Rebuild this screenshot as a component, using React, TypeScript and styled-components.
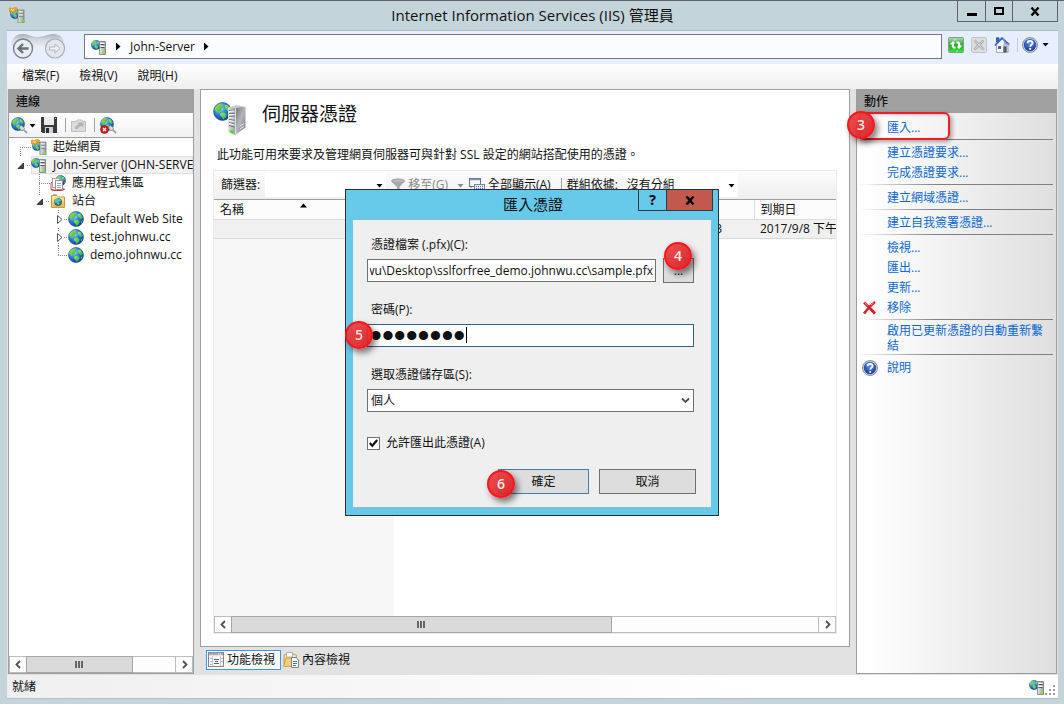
import React, { useLayoutEffect, useRef, useState } from "react";
import styled, { createGlobalStyle, css } from "styled-components";

const FONT = '"Open Sans", "Noto Sans CJK TC", sans-serif';

const GlobalStyle = createGlobalStyle`
  * { box-sizing: border-box; }
  body { margin: 0; font: 12px/18px ${FONT}; color: #111; }
  button, input, select { font: inherit; color: inherit; margin: 0; border-radius: 0; outline: none; }
  button { padding: 0; border: 0; background: none; }
  svg { display: block; flex: none; }
`;

/* ---------- icons ---------- */

const HiddenSvg = styled.svg`
  position: absolute;
`;

const IconDefs = () => (
  <HiddenSvg width="0" height="0" aria-hidden="true">
    <defs>
      <radialGradient id="sea" cx="0.35" cy="0.3" r="0.8">
        <stop offset="0" stopColor="#b4eaff" />
        <stop offset="0.45" stopColor="#2f7fe0" />
        <stop offset="1" stopColor="#0b2f8f" />
      </radialGradient>
      <linearGradient id="land" x1="0" y1="0" x2="1" y2="1">
        <stop offset="0" stopColor="#a4ec6a" />
        <stop offset="1" stopColor="#1fae22" />
      </linearGradient>
      <linearGradient id="steel" x1="0" y1="0" x2="1" y2="0">
        <stop offset="0" stopColor="#e6e8ea" />
        <stop offset="1" stopColor="#9a9ea3" />
      </linearGradient>
      <linearGradient id="steelDark" x1="0" y1="0" x2="1" y2="1">
        <stop offset="0" stopColor="#6c6f73" />
        <stop offset="0.5" stopColor="#b4b6b9" />
        <stop offset="1" stopColor="#75787c" />
      </linearGradient>
      <linearGradient id="leaf" x1="0" y1="0" x2="0" y2="1">
        <stop offset="0" stopColor="#b4dcb0" />
        <stop offset="0.5" stopColor="#27a32b" />
        <stop offset="1" stopColor="#35ea35" />
      </linearGradient>
      <linearGradient id="gold" x1="0" y1="0" x2="0" y2="1">
        <stop offset="0" stopColor="#fff0b8" />
        <stop offset="1" stopColor="#e8b64a" />
      </linearGradient>
      <radialGradient id="ink" cx="0.5" cy="0.3" r="0.8">
        <stop offset="0" stopColor="#5f8fe8" />
        <stop offset="1" stopColor="#0d2d8c" />
      </radialGradient>
      <linearGradient id="pill" x1="0" y1="0" x2="0" y2="1">
        <stop offset="0" stopColor="#a9adb5" />
        <stop offset="0.4" stopColor="#d4d8e2" />
        <stop offset="1" stopColor="#eaf0fd" />
      </linearGradient>
    </defs>
  </HiddenSvg>
);

const GlobeShape = ({ x = 0, y = 0, s = 16 }: { x?: number; y?: number; s?: number }) => (
  <g transform={`translate(${x} ${y}) scale(${s / 16})`}>
    <circle cx="8" cy="8" r="7.5" fill="url(#sea)" stroke="#1d4a94" strokeWidth="0.6" />
    <path d="M2 4.4C3.4 2 6 1 8.4 1.2L7.6 3 8.8 4.2 6.8 5.6 6.6 7.2 4.6 8 5.2 9.6 3.2 9 1.4 6.6Z" fill="url(#land)" />
    <path d="M10 2.4 12.6 3 14.6 6.2 13.8 8.4 12 7.6 10.4 5.4Z" fill="url(#land)" />
    <path d="M6.6 9.2 9.4 8.8 11.6 10.6 11 13 8.6 14.8 7.4 12.6 5.8 11Z" fill="url(#land)" />
    <path d="M13 10.4 14.6 9.4 13.4 12.4Z" fill="url(#land)" />
  </g>
);

const ServerShape = () => (
  <g>
    <path d="M8.500 2.500h6v13h-6z" fill="url(#steel)" stroke="#74787d" strokeWidth="0.8" />
    <path d="M9.500 5.500h4M9.500 8.500h4" stroke="#50545a" />
    <path d="M9.500 4.500h4M9.500 7.500h4" stroke="#fff" />
    <rect x="11.5" y="12.5" width="2.5" height="2" fill="#8ee01c" />
  </g>
);

const Globe = () => (
  <svg width="16" height="16" viewBox="0 0 16 16"><GlobeShape /></svg>
);

const ServerIcon = () => (
  <svg width="16" height="16" viewBox="0 0 16 16">
    <GlobeShape x={0} y={1} s={10} />
    <ServerShape />
  </svg>
);

const IisIcon = () => (
  <svg width="16" height="16" viewBox="0 0 16 16">
    <GlobeShape x={1} y={2} s={10} />
    <path d="M0.5 1 3.5 1.500 5.500 0.5 8.500 1 8 4 6 3.5 5 5.500 2.5 4.5 0.5 5Z" fill="#f6a91c" stroke="#c9770a" strokeWidth="0.5" />
    <path d="M2 2.2 3.6 3.4 5 2.6" stroke="#fff2b0" fill="none" />
    <g transform="translate(0.5 0.5)"><ServerShape /></g>
  </svg>
);

const BigServerIcon = () => (
  <svg width="34" height="34" viewBox="0 0 34 34">
    <GlobeShape x={0} y={0} s={19} />
    <path d="M15 5.500 22 4.500V33L15 30Z" fill="url(#steel)" />
    <path d="M22 4.500 32.500 5V25.500L22 33Z" fill="url(#steelDark)" />
    <path d="M16 8.500 21.500 8M16 11.500 21.500 11.500M16 14.500 21.500 15M16 17.500 21.500 18.500M16 20.500 21.500 22M16 23.500 21.500 25" stroke="#6f7277" />
    <path d="M16 9.500 21.500 9M16 12.500 21.500 12.500M16 15.500 21.500 16M16 18.500 21.500 19.500M16 21.500 21.500 23" stroke="#fff" />
    <path d="M17 29 20.500 30.500" stroke="#4be01c" strokeWidth="2.500" />
    <path d="M27 24 31 21.500M27 27 31 24.500" stroke="#e9eaec" />
    <path d="M15 5.500 24 3 32.500 5 22 6Z" fill="#c9cbce" />
    <path d="M22.500 6V32" stroke="#f1f2f3" strokeWidth="0.800" />
  </svg>
);

const ConnectIcon = ({ denied }: { denied?: boolean }) => (
  <svg width="17" height="17" viewBox="0 0 17 17">
    <GlobeShape x={0} y={0} s={14} />
    <path d="M8 10 10.500 8.500 13.500 11 12.500 13.500 10 13.500Z" fill="#d3d8dd" stroke="#7d8690" strokeWidth="0.8" />
    <path d="M13 13 16 16" stroke="#9aa2aa" strokeWidth="1.800" />
    {denied && (
      <g>
        <circle cx="4.500" cy="12.500" r="4" fill="#d2191f" stroke="#8d0f12" strokeWidth="0.600" />
        <path d="M3 11 6 14M6 11 3 14" stroke="#fff" strokeWidth="1.400" />
      </g>
    )}
  </svg>
);

const SaveIcon = () => (
  <svg width="16" height="16" viewBox="0 0 16 16">
    <path d="M0 0H16V16H1.500L0 14.500Z" fill="#3a3a3c" />
    <rect x="3" y="0" width="10" height="8" fill="#e9ebed" />
    <rect x="4" y="10" width="8" height="6" fill="#cfd1d4" />
    <rect x="5" y="11" width="3" height="5" fill="#2b2b2d" />
    <rect x="14" y="1" width="1" height="1" fill="#bbb" />
  </svg>
);

const UpIcon = () => (
  <svg width="15" height="16" viewBox="0 0 15 16">
    <path d="M0.500 4.500H5L6 3H11L12 4.500H14.500V14.500H0.500Z" fill="#dcdcdc" stroke="#bfbfbf" />
    <path d="M4 12C4 9 6 7.500 8 7.500L6.500 5.500H12.500V10.500L10.500 9C8 9.500 7 10.500 6.500 12Z" fill="#b3b3b3" />
  </svg>
);

const PoolIcon = () => (
  <svg width="16" height="16" viewBox="0 0 16 16">
    <GlobeShape x={5} y={0} s={11} />
    <path d="M1 14C3 16 11 16 14.500 14" stroke="#c4373a" strokeWidth="1.500" fill="none" />
    <path d="M1 14V8L3 6.500" stroke="#cf4a4c" fill="none" />
    <rect x="2.500" y="3.500" width="7" height="9" fill="#fff" stroke="#b09a9c" />
    <rect x="5.500" y="5.500" width="7" height="9" fill="#fdfdfd" stroke="#a08a8d" />
    <path d="M7 8.500h4M7 10.500h4M7 12.500h4" stroke="#9aa6b4" />
  </svg>
);

const SitesIcon = () => (
  <svg width="16" height="16" viewBox="0 0 16 16">
    <path d="M1.500 2.500H7L8.500 4H14.500V14.500H1.500Z" fill="url(#gold)" stroke="#c69a3a" />
    <path d="M3 1.500H6.500" stroke="#8ec4e8" />
    <GlobeShape x={4} y={5} s={8} />
  </svg>
);

const RefreshIcon = () => (
  <svg width="16" height="16" viewBox="0 0 16 16">
    <rect x="0.500" y="0.500" width="15" height="15" rx="1" fill="url(#leaf)" stroke="#7fa382" />
    <path d="M1.500 7.500 5 4 7.500 6.500H6V9.500H7.500V11.500H5.500L3.800 10V7.500Z" fill="#fff" />
    <path d="M14.500 8.500 11 12 8.500 9.500H10V6.500H8.500V4.500H10.500L12.200 6V8.500Z" fill="#fff" />
    <path d="M6 3.500 8 2M10 13.500 8 14.500" stroke="#dff5df" strokeWidth="0.800" />
  </svg>
);

const StopIcon = () => (
  <svg width="16" height="16" viewBox="0 0 16 16">
    <rect x="0.500" y="0.500" width="15" height="15" rx="1" fill="#dcdee2" stroke="#c0c2c6" />
    <path d="M3.500 3.500 12.500 12.500M12.500 3.500 3.500 12.500" stroke="#b0b2b6" strokeWidth="2.800" />
    <path d="M4 4 12 12M12 4 4 12" stroke="#d4d6da" strokeWidth="1" />
  </svg>
);

const HomeIcon = () => (
  <svg width="16" height="16" viewBox="0 0 16 16">
    <path d="M2.500 0.800H5V5H2.500Z" fill="#3c6fd8" stroke="#28418c" strokeWidth="0.800" />
    <path d="M2.500 8 8 2 14 7.500V15.500H2.500Z" fill="#f1f4f8" stroke="#8e97a5" strokeWidth="0.800" />
    <path d="M9 8 11 3.500 14.500 7V15.500H9Z" fill="#b9c0cb" />
    <path d="M0.800 8.500 8 1 15.200 7.500" stroke="#2f5fc6" strokeWidth="1.600" fill="none" />
    <path d="M9.500 2 11 6 15.500 8" stroke="#7f9bd6" strokeWidth="1.200" fill="none" />
    <rect x="4" y="9" width="3" height="3" fill="#53617a" />
    <rect x="9.500" y="9.500" width="3" height="6" fill="#4e5a70" />
  </svg>
);

const HelpIcon = () => (
  <svg width="16" height="16" viewBox="0 0 16 16">
    <circle cx="8" cy="8" r="7.500" fill="#cfd6e4" stroke="#6e7891" strokeWidth="0.800" />
    <circle cx="8" cy="8" r="6.200" fill="url(#ink)" />
    <path d="M5.600 6.200C5.600 3.200 10.600 3.200 10.600 6 10.600 7.800 8.200 7.800 8.200 9.800" stroke="#fff" strokeWidth="1.800" fill="none" />
    <rect x="7.300" y="11" width="1.800" height="1.800" fill="#fff" />
  </svg>
);

const RemoveIcon = () => (
  <svg width="15" height="14" viewBox="0 0 15 14">
    <path d="M2 1.500C5 4 9 8.500 13 12.500" stroke="#e0181e" strokeWidth="2.800" fill="none" />
    <path d="M13 1C9 4 5 8.500 2 12.500" stroke="#d2282c" strokeWidth="2.600" fill="none" />
    <path d="M2.500 1.500 6 4.500M11.500 1.800 9 4" stroke="#f59a9c" />
  </svg>
);

const FunnelIcon = () => (
  <svg width="14" height="14" viewBox="0 0 14 14">
    <ellipse cx="7" cy="3" rx="6.500" ry="2" fill="#b9b9b9" stroke="#9a9a9a" />
    <path d="M0.500 3.500C3 5.500 11 5.500 13.500 3.500L8.500 9V12L6 13.500V9Z" fill="#a8a8a8" />
  </svg>
);

const ShowAllIcon = () => (
  <svg width="16" height="16" viewBox="0 0 16 16">
    <rect x="0.500" y="1.500" width="11" height="8" fill="#f4f6f9" stroke="#6d7683" />
    <path d="M1 2.500H11" stroke="#8794a6" strokeWidth="1.500" />
    <path d="M2 9 2 11" stroke="#6d7683" />
    <rect x="5.500" y="7.500" width="10" height="5" fill="#dfe9f6" stroke="#7887a0" />
    <path d="M7 9.500h7M7 11.500h7" stroke="#4a76bb" strokeDasharray="1 1" />
  </svg>
);

const FeaturesIcon = () => (
  <svg width="16" height="16" viewBox="0 0 16 16">
    <rect x="0.500" y="0.500" width="15" height="14" fill="#fafafa" stroke="#8b8289" />
    <path d="M1 2H15" stroke="#a9abb4" strokeWidth="2.500" />
    <path d="M10 2h4" stroke="#fff" strokeDasharray="1 1" />
    <path d="M4.500 4V14M12.500 4V14" stroke="#c3c5cb" />
    <path d="M2 6.500h2M2 9.500h2M2 12.500h2M13 6.500h2M13 9.500h2" stroke="#b9bbc2" />
    <path d="M6 7.500h5M7 9.500h3M6 11.500h5" stroke="#5c5e66" />
  </svg>
);

const ContentIcon = () => (
  <svg width="16" height="16" viewBox="0 0 16 16">
    <path d="M1 3 5 1.500 9 2 13.500 3V14H1Z" fill="url(#gold)" stroke="#b98f38" strokeWidth="0.800" />
    <path d="M3.500 0.500H9.500V5H3.500Z" fill="#fff" stroke="#a5a5a5" strokeWidth="0.800" />
    <path d="M0.500 14.500 3 6H9V14.500Z" fill="#f3cf76" stroke="#c79b3f" strokeWidth="0.800" />
    <path d="M8.500 5.500H13L15.500 8V15.500H8.500Z" fill="#fff" stroke="#5d6f8d" strokeWidth="0.800" />
    <path d="M10 9.500h4M10 11.500h4M10 13.500h3" stroke="#3b74c9" />
  </svg>
);

const NavArrows = () => (
  <svg width="56" height="30" viewBox="0 0 56 30">
    <path d="M1 15C1 5 6 1 13 1 19 1 21 4 27 4 34 4 38 1 43 1 51 1 55 6 55 15Z" fill="url(#pill)" />
    <circle cx="13" cy="15.500" r="9.500" fill="#e9edf6" stroke="#7d8087" strokeWidth="1.400" />
    <path d="M18.500 15.500H9M13 11 8.500 15.500 13 20" stroke="#6b6e74" strokeWidth="2.400" fill="none" />
    <circle cx="45" cy="15.500" r="9.500" fill="#e2e6ef" stroke="#a9adb6" strokeWidth="1.200" />
    <path d="M39.500 14H45V11L50 15.500 45 20V17H39.500Z" fill="#eef1f8" stroke="#b2b6bf" />
  </svg>
);

const Triangle = ({ dir, color = "#000" }: { dir: "down" | "up" | "right"; color?: string }) => (
  <svg width="7" height="9" viewBox="0 0 7 9">
    <path
      d={dir === "down" ? "M0.500 3H6.500L3.500 6.500Z" : dir === "up" ? "M0 6.500H7L3.500 2.500Z" : "M1 0.500V8.500L5.500 4.500Z"}
      fill={color}
    />
  </svg>
);

const Chevron = ({ dir }: { dir: "left" | "right" | "down" }) => (
  <svg width="9" height="9" viewBox="0 0 9 9">
    <path
      d={dir === "left" ? "M6 1 2.500 4.500 6 8" : dir === "right" ? "M3 1 6.500 4.500 3 8" : "M1 2.500 4.500 6 8 2.500"}
      fill="none"
      stroke="#505050"
      strokeWidth="1.800"
    />
  </svg>
);

/* ---------- window frame ---------- */

const Window = styled.div`
  position: relative;
  display: flex;
  flex-direction: column;
  height: 100vh;
  padding: 0 6px 5px 7px;
  border-top: 1px solid #5f626b;
  background: #c3d5da;
`;

const TitleBar = styled.header`
  position: relative;
  display: flex;
  align-items: flex-start;
  justify-content: space-between;
  flex: none;
  height: 29px;
  padding-left: 2px;
`;

const TitleIcon = styled.span`
  padding-top: 6px;
`;

const Title = styled.h1`
  position: absolute;
  inset: 0;
  margin: 0;
  font-size: 15px;
  line-height: 29px;
  font-weight: 400;
  text-align: center;
  pointer-events: none;
`;

const WindowButtons = styled.div`
  display: flex;
  border: 1px solid #5f626b;
  border-top: 0;
`;

const WindowButton = styled.button<{ $wide?: boolean }>`
  display: grid;
  place-items: center;
  width: ${(p) => (p.$wide ? 45 : 27)}px;
  height: 20px;
  & + & { border-left: 1px solid #5f626b; }
`;

const Client = styled.div`
  display: flex;
  flex-direction: column;
  flex: 1;
  min-height: 0;
  border-top: 1px solid #adbcc2;
  border-bottom: 1px solid #b3bfc4;
  background: #e2e2e2;
`;

const NavBar = styled.div`
  display: flex;
  align-items: center;
  flex: none;
  height: 33px;
  padding: 0 9px 0 3px;
  background: #e7eefe;
`;

const Address = styled.div`
  display: flex;
  align-items: center;
  gap: 8px;
  flex: 1;
  height: 25px;
  margin: 0 6px 2px 18px;
  padding-left: 6px;
  border: 1px solid #777;
  background: #fbfcff;
`;

const NavTools = styled.div`
  display: flex;
  align-items: center;
  gap: 7px;
  margin-bottom: 6px;
`;

const IconButton = styled.button`
  display: flex;
  align-items: center;
  gap: 4px;
`;

const MenuDropButton = styled(IconButton)`
  gap: 1px;
`;

const Divider = styled.span`
  width: 1px;
  height: 14px;
  background: #a0a0a0;
`;

const NavDivider = styled(Divider)`
  margin-right: -3px;
  background: #c4c8d2;
`;

const MenuBar = styled.nav`
  display: flex;
  gap: 20px;
  flex: none;
  height: 25px;
  padding-left: 15px;
  background: linear-gradient(#fefefe, #efefef);
`;

const MenuItem = styled.button`
  height: 23px;
  line-height: 23px;
`;

const Main = styled.main`
  display: flex;
  gap: 6px;
  flex: 1;
  min-height: 0;
  padding: 0 1px 1px;
`;

/* ---------- panes ---------- */

const Pane = styled.section<{ $width: number; $shaded?: boolean }>`
  display: flex;
  flex-direction: column;
  flex: none;
  width: ${(p) => p.$width}px;
  border: 1px solid #9e9e9e;
  background: ${(p) => (p.$shaded ? "linear-gradient(90deg, #fff 5%, #dfdfdf)" : "#fff")};
`;

const PaneHeader = styled.h2`
  flex: none;
  height: 23px;
  margin: 0;
  padding-left: 7px;
  font-size: 12px;
  line-height: 23px;
  font-weight: 500;
  background: #a0a0a0;
`;

const ConnectionTools = styled.div`
  display: flex;
  align-items: center;
  gap: 5px;
  flex: none;
  height: 25px;
  padding-left: 2px;
  border-bottom: 1px solid #a0a0a0;
  background: linear-gradient(#fff, #f2f2f2);
  ${Divider} { margin-left: 3px; }
`;

const Tree = styled.ul`
  flex: 1;
  min-height: 0;
  margin: 0;
  padding: 0;
  overflow: hidden;
  list-style: none;
`;

const TreeRow = styled.li`
  display: flex;
  align-items: center;
  height: 18px;
  white-space: nowrap;
`;

const TreeNode = styled.span<{ $selected?: boolean }>`
  display: flex;
  align-items: center;
  gap: 6px;
  flex: 1;
  min-width: 0;
  height: 18px;
  overflow: hidden;
  ${(p) =>
    p.$selected &&
    css`
      background: #f1f1f1;
      box-shadow: inset 0 0 0 1px #e0e0e0;
    `}
`;

type Expander = "open" | "closed" | "none";

interface NodeData {
  label: string;
  indent: number;
  expander: Expander;
  icon: React.ReactNode;
  selected?: boolean;
  lines: string;
}

const nodes: NodeData[] = [
  { label: "起始網頁", indent: 22, expander: "none", icon: <IisIcon />, lines: "M11.5 9V18M11 9.5H22" },
  { label: "John-Server (JOHN-SERVER)", indent: 22, expander: "open", icon: <ServerIcon />, selected: true, lines: "M18 9.5H22" },
  { label: "應用程式集區", indent: 41, expander: "none", icon: <PoolIcon />, lines: "M30.5 0V18M30 9.5H41" },
  { label: "站台", indent: 41, expander: "open", icon: <SitesIcon />, lines: "M30.5 0V4M37 9.5H41" },
  { label: "Default Web Site", indent: 59, expander: "closed", icon: <Globe />, lines: "M49.5 0V3M55 9.5H59" },
  { label: "test.johnwu.cc", indent: 59, expander: "closed", icon: <Globe />, lines: "M49.5 0V3M49.5 15V18M55 9.5H59" },
  { label: "demo.johnwu.cc", indent: 59, expander: "none", icon: <Globe />, lines: "M49.5 0V9M49 9.5H59" },
];

const Guide = ({ indent, expander, lines }: Pick<NodeData, "indent" | "expander" | "lines">) => (
  <svg width={indent} height="18" viewBox={`0 0 ${indent} 18`}>
    <path d={lines} stroke="#8c8c8c" strokeDasharray="1 1" fill="none" />
    {expander === "open" && <path d={`M${indent - 13} 12.500H${indent - 7.5}V7Z`} fill="#404040" stroke="#222" strokeWidth="0.800" />}
    {expander === "closed" && <path d={`M${indent - 10.5} 5.500V13.500L${indent - 6} 9.500Z`} fill="#fff" stroke="#555" />}
  </svg>
);

const ScrollTrack = styled.div`
  display: flex;
  flex: none;
  height: 17px;
  border: 1px solid #bdbdbd;
  background: #fdfdfd;
`;

const ScrollButton = styled.button`
  display: grid;
  place-items: center;
  flex: none;
  width: 16px;
`;

const ScrollLane = styled.div`
  display: flex;
  flex: 1;
  border: solid #bdbdbd;
  border-width: 0 1px;
`;

const ScrollThumb = styled.div<{ $share: number }>`
  display: flex;
  align-items: center;
  justify-content: center;
  gap: 1px;
  width: ${(p) => p.$share}%;
  margin: -1px 0 -1px -1px;
  border: 1px solid #a6a6a6;
  background: #dadada;
`;

const Grip = styled.i`
  width: 2px;
  height: 7px;
  background: #666;
`;

const ScrollBar = ({ share }: { share: number }) => (
  <ScrollTrack>
    <ScrollButton aria-label="向左捲動"><Chevron dir="left" /></ScrollButton>
    <ScrollLane>
      <ScrollThumb $share={share}><Grip /><Grip /><Grip /></ScrollThumb>
    </ScrollLane>
    <ScrollButton aria-label="向右捲動"><Chevron dir="right" /></ScrollButton>
  </ScrollTrack>
);

/* ---------- centre ---------- */

const Centre = styled.div`
  display: flex;
  flex-direction: column;
  flex: 1;
  min-width: 0;
`;

const Feature = styled.section`
  display: flex;
  flex-direction: column;
  flex: 1;
  min-height: 0;
  padding: 12px;
  border: 1px solid #9e9e9e;
  background: #fff;
`;

const FeatureHead = styled.div`
  display: flex;
  gap: 15px;
  height: 44px;
`;

const FeatureTitle = styled.h2`
  margin: 0;
  font-size: 19px;
  line-height: 24px;
  font-weight: 400;
`;

const Description = styled.p`
  margin: 0;
  padding: 0 4px 6px;
  line-height: 18px;
`;

const Grid = styled.div`
  display: flex;
  flex-direction: column;
  flex: 1;
  min-height: 0;
  border: 1px solid #ececec;
`;

const FilterBar = styled.div`
  display: flex;
  align-items: center;
  flex: none;
  height: 29px;
  padding-left: 7px;
  border-bottom: 1px solid #a0a0a0;
  background: linear-gradient(#fcfcfc, #efefef);
  white-space: nowrap;
`;

const Combo = styled.span<{ $width: number }>`
  position: relative;
  width: ${(p) => p.$width}px;
  height: 24px;
  margin: 0 4px 0 5px;
  background: #fff;
  & > svg { position: absolute; top: 8px; right: 3px; pointer-events: none; }
`;

const comboField = css`
  width: 100%;
  height: 100%;
  padding: 0 4px;
  border: 0;
  background: none;
  appearance: none;
`;

const ComboInput = styled.input`${comboField}`;
const ComboSelect = styled.select`${comboField}`;

const ToolButton = styled.button<{ $muted?: boolean }>`
  display: flex;
  align-items: center;
  gap: 3px;
  margin-left: 1px;
  color: ${(p) => (p.$muted ? "#8a8a8a" : "#111")};
  & > svg:last-child:not(:first-child) { margin: 0 4px 0 6px; }
`;

const FilterDivider = styled(Divider)`
  margin: 0 5px 0 10px;
`;

const ListArea = styled.div`
  flex: 1;
  min-height: 0;
  overflow: hidden;
  background: linear-gradient(90deg, #f7f7f7 180px, #fff 180px);
`;

const List = styled.table`
  width: 100%;
  table-layout: fixed;
  border-collapse: collapse;
  white-space: nowrap;
`;

const HeadCell = styled.th<{ $width?: number }>`
  position: relative;
  width: ${(p) => (p.$width ? `${p.$width}px` : "auto")};
  height: 19px;
  padding: 0 6px;
  border-right: 1px solid #dcdcdc;
  border-bottom: 1px solid #dcdcdc;
  line-height: 17px;
  font-weight: 400;
  text-align: left;
  background: #fcfcfc;
  &:last-child { border-right: 0; }
  & > svg { position: absolute; top: 1px; left: 86px; }
`;

const Cell = styled.td<{ $end?: boolean }>`
  height: 19px;
  padding: 0 ${(p) => (p.$end ? 32 : 0)}px 0 6px;
  border-bottom: 1px solid #d9d9d9;
  line-height: 17px;
  overflow: hidden;
  text-align: ${(p) => (p.$end ? "right" : "left")};
  background: #f0f0f0;
`;

const ViewTabs = styled.div`
  display: flex;
  gap: 2px;
  flex: none;
  height: 27px;
  padding: 3px 6px;
`;

const ViewTab = styled.button<{ $active?: boolean }>`
  display: flex;
  align-items: center;
  gap: 3px;
  height: 20px;
  ${(p) => p.$active && css`
    padding: 0 5px 0 1px;
    border: 1px solid #3399ff;
    background: #fff;
  `}
`;

/* ---------- actions ---------- */

const ActionList = styled.div`
  padding: 5px 3px 0 2px;
`;

const ActionGroup = styled.div`
  & + & {
    padding-top: 5px;
    background: linear-gradient(90deg, transparent, #808080 40%) 0 1px / 100% 1px no-repeat;
  }
`;

const ActionRow = styled.div<{ $tall?: boolean }>`
  position: relative;
  display: grid;
  grid-template-columns: 28px 1fr;
  align-items: center;
  line-height: ${(p) => (p.$tall ? 15 : 20)}px;
  padding-right: 8px;
  & > svg { margin-left: 3px; }
`;

const ActionLink = styled.a`
  grid-column: 2;
  color: #0a68d0;
  text-decoration: none;
`;

const Highlight = styled.span`
  position: absolute;
  top: -6px;
  left: -1px;
  width: 92px;
  height: 28px;
  border: 2px solid #ee1c25;
  border-radius: 6px;
  box-shadow: 2px 2px 4px rgba(0, 0, 0, 0.35), inset 1px 1px 3px rgba(0, 0, 0, 0.2);
  pointer-events: none;
`;

const Badge = styled.span<{ $top: number; $left: number }>`
  position: absolute;
  top: ${(p) => p.$top}px;
  left: ${(p) => p.$left}px;
  z-index: 2;
  width: 28px;
  height: 28px;
  border: 2px solid #f8151b;
  border-radius: 50%;
  background: linear-gradient(135deg, rgba(238, 70, 72, 0.95), rgba(214, 30, 34, 0.95));
  box-shadow: 3px 4px 6px rgba(0, 0, 0, 0.5);
  color: #ffe9e9;
  font: 600 14px/24px "Open Sans", sans-serif;
  text-align: center;
  pointer-events: none;
`;

const StatusBar = styled.footer`
  display: flex;
  align-items: center;
  justify-content: space-between;
  flex: none;
  height: 23px;
  padding: 0 3px 0 5px;
  background: linear-gradient(90deg, #efefef, #fff 70%);
`;

const StatusIcons = styled.span`
  display: flex;
  align-items: flex-end;
`;

/* ---------- dialog ---------- */

const Overlay = styled.div`
  position: fixed;
  inset: 0;
  display: grid;
  place-items: center;
  padding-top: 1px;
`;

const DialogBox = styled.section`
  width: 374px;
  padding: 0 7px 7px;
  border: 1px solid #26343a;
  background: #66c9ea;
`;

const DialogTitleBar = styled.div`
  position: relative;
  display: flex;
  justify-content: flex-end;
  height: 29px;
  margin-right: -2px;
`;

const DialogTitle = styled.h2`
  position: absolute;
  inset: 0;
  margin: 0;
  font-size: 15px;
  line-height: 29px;
  font-weight: 400;
  text-align: center;
  pointer-events: none;
`;

const DialogButton = styled.button<{ $close?: boolean }>`
  display: grid;
  place-items: center;
  width: ${(p) => (p.$close ? 47 : 28)}px;
  height: 21px;
  border: 1px solid #2b3c44;
  border-top: 0;
  border-right-width: ${(p) => (p.$close ? 1 : 0)}px;
  font: 700 14px/18px "Noto Sans", sans-serif;
  color: #000;
  background: ${(p) => (p.$close ? "#c1594f" : "transparent")};
`;

const DialogBody = styled.form`
  display: flex;
  flex-direction: column;
  height: 289px;
  padding: 16px 15px 13px 14px;
  border: solid #8fbccb;
  border-width: 1px 0;
  background: #efefef;
`;

const Field = styled.div`
  display: flex;
  flex-direction: column;
  gap: 6px;
  margin-bottom: 19px;
  padding-right: 2px;
  & > label { padding-left: 4px; line-height: 17px; }
`;

const FieldRow = styled.div`
  position: relative;
  display: flex;
  align-items: center;
  gap: 7px;
  height: 23px;
`;

const TextBox = styled.input<{ $focused?: boolean }>`
  flex: 1;
  min-width: 0;
  height: 23px;
  padding: 0 2px;
  border: 1px solid ${(p) => (p.$focused ? "#2c628b" : "#707070")};
  background: #fff;
`;

const PasswordBox = styled(TextBox)`
  font: 34px/21px "Liberation Sans", sans-serif;
`;

const Caret = styled.i`
  position: absolute;
  top: 3px;
  left: 99px;
  width: 1px;
  height: 16px;
  background: #000;
`;

const StoreSelect = styled.select`
  flex: 1;
  height: 23px;
  padding: 0 3px;
  border: 1px solid #707070;
  background: #fff;
  appearance: none;
`;

const SelectArrow = styled.span`
  position: absolute;
  top: 7px;
  right: 4px;
  pointer-events: none;
`;

const PushButton = styled.button<{ $width: number; $primary?: boolean }>`
  flex: none;
  width: ${(p) => p.$width}px;
  height: 25px;
  border: 1px solid ${(p) => (p.$primary ? "#3c7fb1" : "#707070")};
  background: #dddddd;
`;

const CheckLabel = styled.label`
  position: relative;
  display: flex;
  align-items: center;
  gap: 6px;
  margin-top: 3px;
  line-height: 18px;
  & > svg { position: absolute; left: 2px; top: 5px; }
`;

const CheckBox = styled.input`
  width: 13px;
  height: 13px;
  border: 1px solid #707070;
  background: #fff;
  appearance: none;
`;

const Buttons = styled.div`
  position: relative;
  display: flex;
  justify-content: flex-end;
  gap: 10px;
  margin-top: auto;
`;

const CERT_PATH = "C:\\Users\\johnwu\\Desktop\\sslforfree_demo.johnwu.cc\\sample.pfx";

function ImportDialog() {
  const [path, setPath] = useState(CERT_PATH);
  const [password, setPassword] = useState("password");
  const [exportable, setExportable] = useState(true);
  const pathRef = useRef<HTMLInputElement>(null);

  // Keep the file name, at the end of the path, in view.
  useLayoutEffect(() => {
    if (pathRef.current) pathRef.current.scrollLeft = pathRef.current.scrollWidth;
  }, [path]);

  return (
    <Overlay>
      <DialogBox role="dialog" aria-labelledby="import-title">
        <DialogTitleBar>
          <DialogTitle id="import-title">匯入憑證</DialogTitle>
          <DialogButton>?</DialogButton>
          <DialogButton $close aria-label="關閉">
            <svg width="10" height="9" viewBox="0 0 10 9">
              <path d="M1.500 0.500 8.500 8.500M8.500 0.500 1.500 8.500" stroke="#000" strokeWidth="2.400" />
            </svg>
          </DialogButton>
        </DialogTitleBar>
        <DialogBody onSubmit={(e) => e.preventDefault()}>
          <Field>
            <label htmlFor="pfx">憑證檔案 (.pfx)(C):</label>
            <FieldRow>
              <TextBox id="pfx" ref={pathRef} value={path} onChange={(e) => setPath(e.target.value)} />
              <PushButton type="button" $width={31}>...</PushButton>
              <Badge $top={-17} $left={297}>4</Badge>
            </FieldRow>
          </Field>
          <Field>
            <label htmlFor="pwd">密碼(P):</label>
            <FieldRow>
              <PasswordBox id="pwd" type="password" $focused value={password} onChange={(e) => setPassword(e.target.value)} />
              <Caret />
              <Badge $top={-3} $left={-22}>5</Badge>
            </FieldRow>
          </Field>
          <Field>
            <label htmlFor="store">選取憑證儲存區(S):</label>
            <FieldRow>
              <StoreSelect id="store"><option>個人</option></StoreSelect>
              <SelectArrow><Chevron dir="down" /></SelectArrow>
            </FieldRow>
          </Field>
          <CheckLabel>
            <CheckBox type="checkbox" checked={exportable} onChange={(e) => setExportable(e.target.checked)} />
            {exportable && (
              <svg width="9" height="9" viewBox="0 0 9 9">
                <path d="M0.800 4 3.300 6.800 8.200 1" fill="none" stroke="#111" strokeWidth="2.200" />
              </svg>
            )}
            允許匯出此憑證(A)
          </CheckLabel>
          <Buttons>
            <Badge $top={1} $left={120}>6</Badge>
            <PushButton type="submit" $width={91} $primary>確定</PushButton>
            <PushButton type="button" $width={97}>取消</PushButton>
          </Buttons>
        </DialogBody>
      </DialogBox>
    </Overlay>
  );
}

/* ---------- page ---------- */

interface Action {
  label: string;
  icon?: React.ReactNode;
  tall?: boolean;
  marked?: boolean;
}

const actionGroups: Action[][] = [
  [{ label: "匯入...", marked: true }],
  [{ label: "建立憑證要求..." }, { label: "完成憑證要求..." }],
  [{ label: "建立網域憑證..." }],
  [{ label: "建立自我簽署憑證..." }],
  [{ label: "檢視..." }, { label: "匯出..." }, { label: "更新..." }, { label: "移除", icon: <RemoveIcon /> }],
  [{ label: "啟用已更新憑證的自動重新繫結", tall: true }],
  [{ label: "說明", icon: <HelpIcon /> }],
];

export default function App() {
  return (
    <>
      <GlobalStyle />
      <IconDefs />
      <Window>
        <TitleBar>
          <TitleIcon><IisIcon /></TitleIcon>
          <Title>Internet Information Services (IIS) 管理員</Title>
          <WindowButtons>
            <WindowButton aria-label="最小化">
              <svg width="10" height="10" viewBox="0 0 10 10"><path d="M0 8.500H10" stroke="#000" strokeWidth="3" /></svg>
            </WindowButton>
            <WindowButton aria-label="最大化">
              <svg width="10" height="8" viewBox="0 0 10 8"><rect x="1" y="1" width="8" height="6" fill="none" stroke="#000" strokeWidth="2" /></svg>
            </WindowButton>
            <WindowButton $wide aria-label="關閉">
              <svg width="10" height="9" viewBox="0 0 10 9"><path d="M1.500 0.500 8.500 8.500M8.500 0.500 1.500 8.500" stroke="#000" strokeWidth="2.300" /></svg>
            </WindowButton>
          </WindowButtons>
        </TitleBar>
        <Client>
          <NavBar>
            <NavArrows />
            <Address>
              <ServerIcon />
              <Triangle dir="right" />
              <span>John-Server</span>
              <Triangle dir="right" />
            </Address>
            <NavTools>
              <IconButton aria-label="重新整理"><RefreshIcon /></IconButton>
              <IconButton aria-label="停止"><StopIcon /></IconButton>
              <IconButton aria-label="首頁"><HomeIcon /></IconButton>
              <NavDivider />
              <IconButton aria-label="說明"><HelpIcon /><Triangle dir="down" /></IconButton>
            </NavTools>
          </NavBar>
          <MenuBar>
            <MenuItem>檔案(F)</MenuItem>
            <MenuItem>檢視(V)</MenuItem>
            <MenuItem>說明(H)</MenuItem>
          </MenuBar>
          <Main>
            <Pane $width={186}>
              <PaneHeader>連線</PaneHeader>
              <ConnectionTools>
                <MenuDropButton aria-label="連線"><ConnectIcon /><Triangle dir="down" /></MenuDropButton>
                <IconButton aria-label="儲存"><SaveIcon /></IconButton>
                <Divider />
                <IconButton aria-label="上一層"><UpIcon /></IconButton>
                <Divider />
                <IconButton aria-label="中斷連線"><ConnectIcon denied /></IconButton>
              </ConnectionTools>
              <Tree>
                {nodes.map((n) => (
                  <TreeRow key={n.label}>
                    <Guide indent={n.indent} expander={n.expander} lines={n.lines} />
                    <TreeNode $selected={n.selected}>
                      {n.icon}
                      {n.label}
                    </TreeNode>
                  </TreeRow>
                ))}
              </Tree>
              <ScrollBar share={72} />
            </Pane>
            <Centre>
              <Feature>
                <FeatureHead>
                  <BigServerIcon />
                  <FeatureTitle>伺服器憑證</FeatureTitle>
                </FeatureHead>
                <Description>此功能可用來要求及管理網頁伺服器可與針對 SSL 設定的網站搭配使用的憑證。</Description>
                <Grid>
                  <FilterBar>
                    <label htmlFor="filter">篩選器:</label>
                    <Combo $width={121}><ComboInput id="filter" /><Triangle dir="down" /></Combo>
                    <ToolButton $muted><FunnelIcon />移至(G)<Triangle dir="down" color="#8a8a8a" /></ToolButton>
                    <ToolButton><ShowAllIcon />全部顯示(A)</ToolButton>
                    <FilterDivider />
                    <label htmlFor="grouping">群組依據:</label>
                    <Combo $width={115}>
                      <ComboSelect id="grouping"><option>沒有分組</option></ComboSelect>
                      <Triangle dir="down" />
                    </Combo>
                  </FilterBar>
                  <ListArea>
                    <List>
                      <thead>
                        <tr>
                          <HeadCell $width={180}>名稱<Triangle dir="up" /></HeadCell>
                          <HeadCell />
                          <HeadCell $width={82}>到期日</HeadCell>
                        </tr>
                      </thead>
                      <tbody>
                        <tr>
                          <Cell />
                          <Cell $end>3</Cell>
                          <Cell>2017/9/8 下午</Cell>
                        </tr>
                      </tbody>
                    </List>
                  </ListArea>
                  <ScrollBar share={65} />
                </Grid>
              </Feature>
              <ViewTabs>
                <ViewTab $active><FeaturesIcon />功能檢視</ViewTab>
                <ViewTab><ContentIcon />內容檢視</ViewTab>
              </ViewTabs>
            </Centre>
            <Pane $width={201} $shaded>
              <PaneHeader>動作</PaneHeader>
              <ActionList>
                {actionGroups.map((group) => (
                  <ActionGroup key={group[0].label}>
                    {group.map((a) => (
                      <ActionRow key={a.label} $tall={a.tall}>
                        {a.icon}
                        <ActionLink href="#">{a.label}</ActionLink>
                        {a.marked && <><Highlight /><Badge $top={-7} $left={-12}>3</Badge></>}
                      </ActionRow>
                    ))}
                  </ActionGroup>
                ))}
              </ActionList>
            </Pane>
          </Main>
          <StatusBar>
            <span>就緒</span>
            <StatusIcons>
              <ServerIcon />
              <svg width="10" height="10" viewBox="0 0 10 10">
                <path d="M0 8h2v2H0zM4 8h2v2H4zM8 8h2v2H8zM4 4h2v2H4zM8 4h2v2H8zM8 0h2v2H8z" fill="#9a9a9a" />
              </svg>
            </StatusIcons>
          </StatusBar>
        </Client>
      </Window>
      <ImportDialog />
    </>
  );
}
